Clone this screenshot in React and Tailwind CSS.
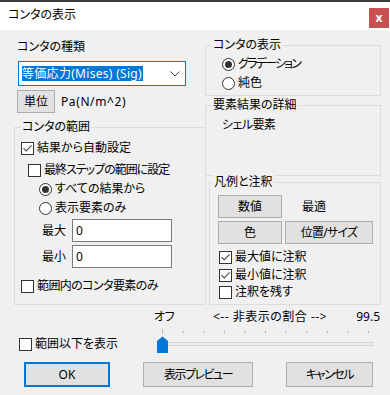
import React from 'react';

// Windows 10 style dialog: コンタの表示

const Check = ({ checked }) => (
    <span className="w-[13px] h-[13px] border border-[#333333] bg-white flex items-center justify-center shrink-0">
        {checked && (
            <svg width="11" height="11" viewBox="0 0 11 11">
                <path d="M1.5 5.2 L4.2 8 L9.6 2.4" fill="none" stroke="#4d4d4d" strokeWidth="1.1" />
            </svg>
        )}
    </span>
);

const Radio = ({ checked }) => (
    <span className="w-[13px] h-[13px] rounded-full border border-[#333333] bg-white flex items-center justify-center shrink-0">
        {checked && <span className="w-[7px] h-[7px] rounded-full bg-[#333333]" />}
    </span>
);

const CheckRow = ({ checked, label, className = '', textClass = '' }) => (
    <div className={`flex items-center gap-[3px] h-[16px] ${className}`}>
        <Check checked={checked} />
        <span className={textClass}>{label}</span>
    </div>
);

const RadioRow = ({ checked, label, className = '', textClass = '' }) => (
    <div className={`flex items-center gap-[3px] h-[16px] ${className}`}>
        <Radio checked={checked} />
        <span className={textClass}>{label}</span>
    </div>
);

const Legend = ({ children, className = '' }) => (
    <div className={`-mt-[9px] w-fit px-[1px] bg-[#f0f0f0] h-[16px] ${className}`}>{children}</div>
);

const Btn = ({ children, className = '' }) => (
    <div className={`bg-[#e1e1e1] border border-[#adadad] flex items-center justify-center ${className}`}>
        {children}
    </div>
);

const Slider = () => {
    const ticks = Array.from({ length: 11 }, (_, i) => 12.5 + i * 20.6);
    return (
        <svg width="240" height="32" viewBox="0 0 240 32">
            {ticks.map((x, i) => (
                <line key={i} x1={x} x2={x} y1={i === 0 ? 4 : 6} y2="8.5" stroke="#b5b5b5" strokeWidth="1" />
            ))}
            <rect x="12.5" y="17.5" width="211" height="3" fill="#e7eaea" stroke="#d6d6d6" />
            <polygon points="7,16 12.5,11.5 18,16 18,28 7,28" fill="#0078d7" />
        </svg>
    );
};

export default function App() {
    return (
        <div className="w-[390px] h-[395px] overflow-hidden bg-[#f0f0f0] text-black text-[12px] leading-[16px] font-['Noto_Sans','Noto_Sans_CJK_JP',sans-serif] [font-feature-settings:'palt']">
            {/* Title bar */}
            <div className="h-[30px] bg-white border-t-2 border-[#3c3c3c] flex items-start justify-between">
                <div className="pl-[8px] pt-[5px]">コンタの表示</div>
                <div className="mt-[6px] mr-[1px] w-[20px] h-[20px] bg-[#c75050] text-white font-bold flex items-center justify-center text-[12px] leading-none">
                    x
                </div>
            </div>

            <div className="flex pl-[14px]">
                {/* Left column */}
                <div className="w-[192px]">
                    <div className="mt-[9px] pl-[3px]">コンタの種類</div>
                    <div className="mt-[6px] ml-[4px] w-[168px] h-[25px] border border-[#0078d7] bg-white flex items-center justify-between">
                        <span className="ml-[3px] h-[15px] leading-[15px] bg-[#0078d7] text-white pr-[1px] tracking-[0.3px]">等価応力(Mises) (Sig)</span>
                        <svg width="10" height="6" viewBox="0 0 10 6" className="mr-[5px]">
                            <path d="M0.5 0.5 L5 5 L9.5 0.5" fill="none" stroke="#444" strokeWidth="1" />
                        </svg>
                    </div>
                    <div className="mt-[4px] ml-[3px] flex items-center h-[23px]">
                        <Btn className="w-[38px] h-[23px]">単位</Btn>
                        <span className="ml-[6px] tracking-[0.6px]">Pa(N/m^2)</span>
                    </div>

                    <div className="mt-[14px] h-[178px] border border-[#dcdcdc]">
                        <Legend className="ml-[6px]">コンタの範囲</Legend>
                        <CheckRow checked label="結果から自動設定" className="mt-[5px] ml-[6px]" />
                        <CheckRow label="最終ステップの範囲に設定" className="mt-[6px] ml-[13px]" textClass="tracking-[-1px]" />
                        <RadioRow checked label="すべての結果から" className="mt-[3px] ml-[24px]" />
                        <RadioRow label="表示要素のみ" className="mt-[3px] ml-[24px]" />
                        <div className="mt-[3px] ml-[27px] flex items-center h-[23px]">
                            <span className="w-[30px]">最大</span>
                            <div className="w-[100px] h-[23px] bg-white border border-[#7a7a7a] pl-[3px] flex items-center">0</div>
                        </div>
                        <div className="mt-[3px] ml-[27px] flex items-center h-[23px]">
                            <span className="w-[30px]">最小</span>
                            <div className="w-[100px] h-[23px] bg-white border border-[#7a7a7a] pl-[3px] flex items-center">0</div>
                        </div>
                        <CheckRow label="範囲内のコンタ要素のみ" className="mt-[10px] ml-[6px]" textClass="tracking-[-0.6px]" />
                    </div>
                </div>

                {/* Right column */}
                <div className="w-[176px] -ml-[1px]">
                    <div className="mt-[15px] h-[51px] border border-[#dcdcdc]">
                        <Legend className="ml-[6px]">コンタの表示</Legend>
                        <RadioRow checked label="グラデーション" className="mt-[3px] ml-[16px]" textClass="tracking-[-1.8px]" />
                        <RadioRow label="純色" className="mt-[3px] ml-[16px]" />
                    </div>

                    <div className="mt-[9px] h-[71px] border border-[#dcdcdc]">
                        <Legend className="ml-[6px]">要素結果の詳細</Legend>
                        <div className="mt-[4px] ml-[16px] tracking-[-0.6px]">シェル要素</div>
                    </div>

                    <div className="mt-[6px] ml-[4px] w-[172px] h-[123px] border border-[#dcdcdc]">
                        <Legend className="ml-[3px]">凡例と注釈</Legend>
                        <div className="mt-[5px] ml-[8px] flex items-center h-[23px]">
                            <Btn className="w-[64px] h-[23px]">数値</Btn>
                            <span className="ml-[20px]">最適</span>
                        </div>
                        <div className="mt-[3px] ml-[8px] flex items-center gap-[3px] h-[23px]">
                            <Btn className="w-[64px] h-[23px]">色</Btn>
                            <Btn className="w-[88px] h-[23px] tracking-[-0.8px]">位置/サイズ</Btn>
                        </div>
                        <CheckRow checked label="最大値に注釈" className="mt-[5px] ml-[9px]" />
                        <CheckRow checked label="最小値に注釈" className="mt-[2px] ml-[9px]" />
                        <CheckRow label="注釈を残す" className="mt-[1px] ml-[9px]" />
                    </div>
                </div>
            </div>

            {/* Slider row */}
            <div className="flex h-[57px]">
                <div className="w-[150px] pl-[19px] pt-[31px]">
                    <CheckRow label="範囲以下を表示" />
                </div>
                <div className="w-[240px]">
                    <div className="mt-[4px] flex h-[16px]">
                        <span className="w-[63px] pl-[4px] tracking-[-0.5px]">オフ</span>
                        <span className="tracking-[0.5px]">&lt;-- 非表示の割合 --&gt;</span>
                        <span className="flex-1 text-right pr-[10px]">99.5</span>
                    </div>
                    <Slider />
                </div>
            </div>

            {/* Buttons */}
            <div className="flex pl-[24px]">
                <div className="w-[86px] h-[25px] bg-[#e1e1e1] border-2 border-[#0078d7] flex items-center justify-center">OK</div>
                <Btn className="ml-[33px] w-[110px] h-[25px] tracking-[-1.5px]">表示プレビュー</Btn>
                <Btn className="ml-[33px] w-[87px] h-[25px] tracking-[-1.4px]">キャンセル</Btn>
            </div>
        </div>
    );
}
